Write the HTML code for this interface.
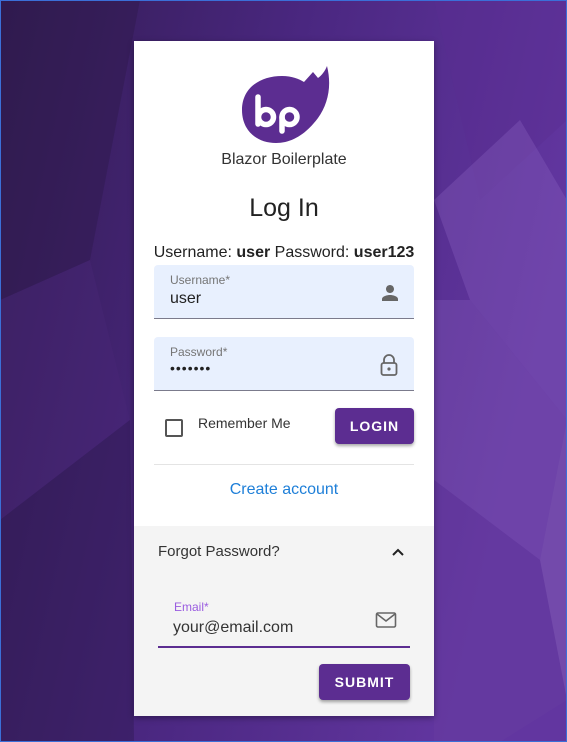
<!DOCTYPE html>
<html><head><meta charset="utf-8"><style>
*{box-sizing:border-box;margin:0;padding:0}
body{width:567px;height:742px;overflow:hidden;font-family:"Liberation Sans",Arial,sans-serif;position:relative;background:#4a2a7a}
.bg{position:absolute;left:0;top:0}
.card{position:absolute;left:134px;top:41px;width:300px;height:675px;background:#fff;box-shadow:0 2px 6px rgba(0,0,0,.35)}
.abs{position:absolute}
.field{position:absolute;left:20px;width:260px;height:54px;background:#e8f0fe;border-bottom:1px solid #7b7b8c;border-radius:4px 4px 0 0}
.lbl{position:absolute;left:16px;top:8px;font-size:12px;color:#757575}
.val{position:absolute;left:16px;top:25px;font-size:16px;color:#222}
.btn{position:absolute;background:#5c2d91;color:#fff;font-weight:bold;font-size:14px;letter-spacing:1px;text-align:center;border-radius:4px;box-shadow:0 2px 3px rgba(0,0,0,.35)}
.grey{position:absolute;left:0;top:485px;width:300px;height:190px;background:#f4f4f4}
</style></head><body>
<svg class="bg" width="567" height="742" viewBox="0 0 567 742">
<defs><linearGradient id="g" x1="0" y1="0" x2="1" y2="0.3"><stop offset="0" stop-color="#321c52"/><stop offset=".5" stop-color="#4a2780"/><stop offset="1" stop-color="#6236a0"/></linearGradient></defs>
<rect width="567" height="742" fill="url(#g)"/>
<polygon points="0,0 140,0 90,260 0,300" fill="#2c1848" opacity=".4"/>
<polygon points="0,300 90,260 130,420 0,520" fill="#4a2878" opacity=".35"/>
<polygon points="0,520 130,420 134,742 0,742" fill="#2e1a4e" opacity=".4"/>
<polygon points="434,0 567,0 567,120 480,200" fill="#5a2e90" opacity=".4"/>
<polygon points="434,200 520,120 567,200 567,420 470,300" fill="#8a62c0" opacity=".35"/>
<polygon points="434,300 470,300 567,420 540,560 434,480" fill="#8a62c0" opacity=".3"/>
<polygon points="434,480 540,560 567,700 500,742 434,742" fill="#6a40a0" opacity=".35"/>
<polygon points="540,560 567,420 567,700" fill="#9a7ac8" opacity=".3"/>
<rect x="0.5" y="0.5" width="566" height="741" fill="none" stroke="#3b6fd8" stroke-width="1"/>
</svg>
<div class="card">
<svg class="abs" style="left:0;top:0" width="300" height="120" viewBox="134 41 300 120">
<path d="M242,110 C242,88 260,76 282,76 C292,76 299,79 304,82 L313,72 L318,78 C322,75 325,71 327,66 C332,86 328,104 318,118 C306,134 292,143 276,143 C256,143 242,130 242,110 Z" fill="#5c2d91"/>
<g stroke="#fff" stroke-width="5.5" fill="none" stroke-linecap="round">
<path d="M258,97 V124"/><circle cx="266" cy="117" r="7.5"/>
<path d="M282,117 V131"/><circle cx="289.5" cy="117" r="7.5"/>
</g>
</svg>
<div class="abs" style="left:0;top:110px;width:300px;text-align:center;font-size:16px;color:#333">Blazor Boilerplate</div>
<div class="abs" style="left:0;top:153px;width:300px;text-align:center;font-size:25px;color:#222">Log In</div>
<div class="abs" style="left:10px;top:203px;width:280px;text-align:center;font-size:16px;color:#222;white-space:nowrap">Username: <b>user</b> Password: <b>user123</b></div>
<div class="field" style="top:224px"><div class="lbl">Username*</div><div class="val">user</div>
<svg class="abs" style="left:224px;top:16px" width="24" height="24" viewBox="0 0 24 24"><path fill="#666" d="M12 12c2.2 0 4-1.8 4-4s-1.8-4-4-4-4 1.8-4 4 1.8 4 4 4zm0 2c-2.7 0-8 1.3-8 4v2h16v-2c0-2.7-5.3-4-8-4z"/></svg></div>
<div class="field" style="top:296px"><div class="lbl">Password*</div><div class="val" style="top:23px;font-size:14px;letter-spacing:1px">•••••••</div>
<svg class="abs" style="left:224px;top:16px" width="22" height="24" viewBox="0 0 22 24"><path d="M6,10 V7 A5,5 0 0 1 16,7 V10" stroke="#666" stroke-width="1.8" fill="none"/><rect x="3.5" y="10" width="15" height="12" rx="2" stroke="#666" stroke-width="1.8" fill="none"/><circle cx="11" cy="16" r="1.6" fill="#666"/></svg></div>
<div class="abs" style="left:31px;top:378px;width:18px;height:18px;border:2px solid #555;border-radius:2px"></div>
<div class="abs" style="left:64px;top:374px;font-size:14px;color:#333">Remember Me</div>
<div class="btn" style="left:201px;top:367px;width:79px;height:36px;line-height:36px">LOGIN</div>
<div class="abs" style="left:20px;top:423px;width:260px;height:1px;background:#e4e4e4"></div>
<div class="abs" style="left:0;top:440px;width:300px;text-align:center;font-size:16px;color:#1e7fd8">Create account</div>
<div class="grey">
<div class="abs" style="left:24px;top:17px;font-size:15px;color:#333">Forgot Password?</div>
<svg class="abs" style="left:256px;top:19px" width="16" height="14" viewBox="0 0 16 14"><path d="M3,10 L8,5 L13,10" stroke="#222" stroke-width="2" fill="none"/></svg>
<div class="abs" style="left:40px;top:74px;font-size:12px;color:#9a5ce0">Email*</div>
<div class="abs" style="left:39px;top:93px;font-size:16px;color:#333">your@email.com</div>
<svg class="abs" style="left:241px;top:85px" width="22" height="18" viewBox="0 0 22 18"><rect x="1.5" y="2" width="19" height="14" rx="1.5" stroke="#666" stroke-width="1.6" fill="none"/><path d="M2,3 L11,10 L20,3" stroke="#666" stroke-width="1.6" fill="none"/></svg>
<div class="abs" style="left:24px;top:120px;width:252px;height:2px;background:#5c2d91"></div>
<div class="btn" style="left:185px;top:138px;width:91px;height:36px;line-height:36px">SUBMIT</div>
</div>
</div>
</body></html>
